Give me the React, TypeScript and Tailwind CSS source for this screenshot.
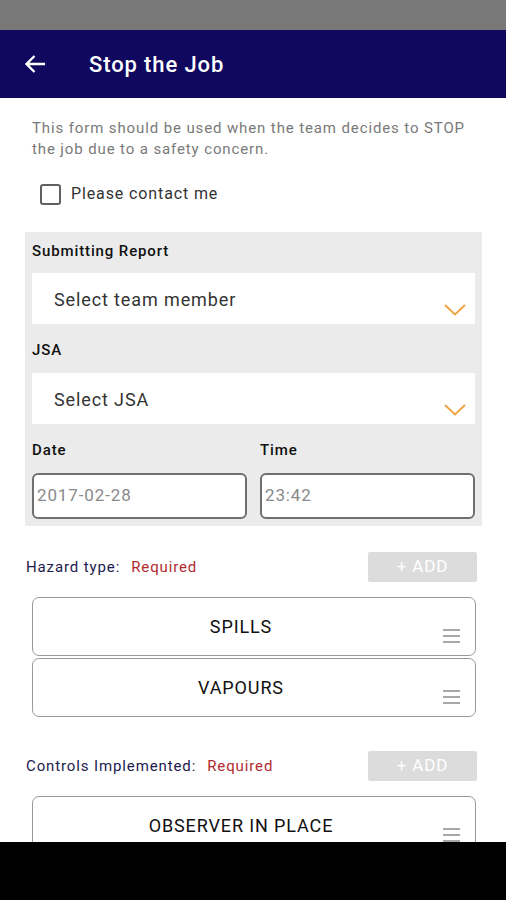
import React from "react";

const Chevron: React.FC = () => (
  <svg width="22" height="12" viewBox="0 0 22 12" className="absolute right-[9px] bottom-[8px]">
    <path d="M1 1 L11 10.5 L21 1" fill="none" stroke="#f0a040" strokeWidth="1.8" />
  </svg>
);

const Grip: React.FC = () => (
  <svg width="17" height="14" viewBox="0 0 17 14" className="absolute right-[15px] bottom-[12px]">
    <rect x="0" y="0" width="17" height="2" fill="#a8a8a8" />
    <rect x="0" y="6" width="17" height="2" fill="#a8a8a8" />
    <rect x="0" y="12" width="17" height="2" fill="#a8a8a8" />
  </svg>
);

const SelectBox: React.FC<{ label: string }> = ({ label }) => (
  <div className="relative h-[51px] bg-white flex items-center pl-[22px] pt-[2px] text-[18px] text-[#333]">
    {label}
  </div>
);

const ItemCard: React.FC<{ label: string }> = ({ label }) => (
  <div className="relative h-[59px] border border-[#9a9a9a] rounded-[7px] bg-white flex items-start justify-center pr-[26px] pt-[15px] text-[18px] text-[#111]">
    {label}
    <Grip />
  </div>
);

const SectionHead: React.FC<{ title: string }> = ({ title }) => (
  <div className="flex items-center justify-between pl-[26px] pr-[29px]">
    <div className="text-[15px]">
      <span className="text-[#1c1a4e]">{title}</span>
      <span className="text-[#b02a30] ml-[11px]">Required</span>
    </div>
    <div className="w-[109px] h-[30px] bg-[#dcdcdc] rounded-[2px] flex items-center justify-center text-[17px] text-white">
      + ADD
    </div>
  </div>
);

export default function App() {
  return (
    <div
      className="w-[506px] h-[900px] flex flex-col overflow-hidden bg-white tracking-[0.055em]"
      style={{ fontFamily: "Roboto, 'Liberation Sans', sans-serif" }}
    >
      {/* status bar */}
      <div className="h-[30px] bg-[#787878] shrink-0" />

      {/* toolbar */}
      <div className="h-[68px] bg-[#10085f] shrink-0 flex items-center">
        <svg width="22" height="20" viewBox="0 0 22 20" className="ml-[24px]">
          <path d="M21 10 H2.5 M10.5 2 L2.5 10 L10.5 18" fill="none" stroke="white" strokeWidth="2.4" />
        </svg>
        <div className="ml-[43px] text-white text-[22px] font-medium">Stop the Job</div>
      </div>

      {/* content */}
      <div className="flex-1 overflow-hidden">
        <p className="pt-[20px] pl-[32px] pr-[26px] text-[15px] leading-[21px] text-[#7a7a7a]">
          This form should be used when the team decides to STOP the job due to a safety concern.
        </p>

        <div className="mt-[22px] ml-[40px] flex items-center">
          <div className="w-[21px] h-[21px] border-2 border-[#606060] rounded-[3px]" />
          <span className="ml-[10px] text-[16px] text-[#333]">Please contact me</span>
        </div>

        <div className="mt-[26px] mx-[25px] w-[457px] bg-[#ebebeb] px-[7px] pt-[8px] pb-[7px]">
          <div className="text-[15px] font-medium text-[#111] h-[23px]">Submitting Report</div>
          <div className="relative mt-[10px]">
            <SelectBox label="Select team member" />
            <Chevron />
          </div>
          <div className="text-[15px] font-medium text-[#111] mt-[15px] h-[23px]">JSA</div>
          <div className="relative mt-[11px]">
            <SelectBox label="Select JSA" />
            <Chevron />
          </div>
          <div className="grid grid-cols-2 gap-[13px] mt-[15px]">
            <div>
              <div className="text-[15px] font-medium text-[#111] h-[23px]">Date</div>
              <div className="mt-[11px] h-[46px] border-2 border-[#707070] rounded-[6px] bg-white flex items-center pl-[3px] text-[17px] text-[#8a8a8a]">
                2017-02-28
              </div>
            </div>
            <div>
              <div className="text-[15px] font-medium text-[#111] h-[23px]">Time</div>
              <div className="mt-[11px] h-[46px] border-2 border-[#707070] rounded-[6px] bg-white flex items-center pl-[3px] text-[17px] text-[#8a8a8a]">
                23:42
              </div>
            </div>
          </div>
        </div>

        <div className="mt-[26px]">
          <SectionHead title="Hazard type:" />
        </div>
        <div className="mt-[15px] ml-[32px] w-[444px] flex flex-col gap-[2px]">
          <ItemCard label="SPILLS" />
          <ItemCard label="VAPOURS" />
        </div>

        <div className="mt-[34px]">
          <SectionHead title="Controls Implemented:" />
        </div>
        <div className="mt-[15px] ml-[32px] w-[444px] flex flex-col gap-[2px]">
          <ItemCard label="OBSERVER IN PLACE" />
        </div>
      </div>

      {/* navigation bar */}
      <div className="h-[58px] bg-black shrink-0" />
    </div>
  );
}
